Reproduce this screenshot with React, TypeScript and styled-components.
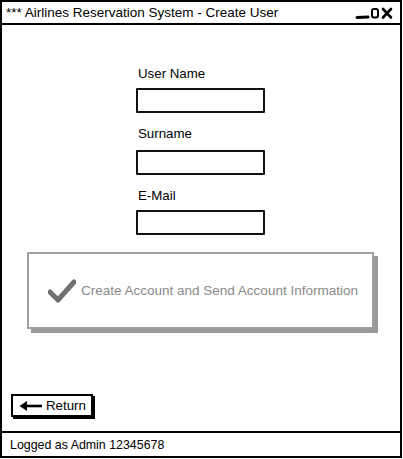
import React from 'react'
import styled, { createGlobalStyle } from 'styled-components'

const GlobalStyle = createGlobalStyle`
  html, body {
    margin: 0;
    padding: 0;
    background: #fff;
  }
  body {
    font-family: 'Liberation Sans', Arial, sans-serif;
    color: #000;
  }
`

const Window = styled.div`
  box-sizing: border-box;
  width: 402px;
  height: 458px;
  border: 2px solid #000;
  display: flex;
  flex-direction: column;
`

const TitleBar = styled.div`
  height: 21px;
  border-bottom: 2px solid #000;
  display: flex;
  align-items: center;
  padding: 0 5px 0 4px;
  font-size: 13.5px;
`

const Title = styled.span`
  flex: 1;
  white-space: nowrap;
`

const Controls = styled.svg`
  display: block;
`

const Content = styled.div`
  flex: 1;
  display: flex;
  flex-direction: column;
`

const Form = styled.div`
  align-self: flex-start;
  width: 129px;
  margin: 41px 0 0 134px;
  display: flex;
  flex-direction: column;
`

const Label = styled.div<{ $gap: number }>`
  font-size: 13.3px;
  line-height: 16px;
  margin: ${(p) => p.$gap}px 0 0 2px;
`

const Input = styled.div<{ $gap: number }>`
  box-sizing: border-box;
  height: 25px;
  border: 2px solid #111;
  border-radius: 1px;
  margin-top: ${(p) => p.$gap}px;
`

const BigButton = styled.div`
  box-sizing: border-box;
  align-self: flex-start;
  width: 347px;
  height: 77px;
  margin: 17px 0 0 25px;
  border: 2px solid #a0a0a0;
  box-shadow: 4px 4px 0 #9a9a9a;
  display: flex;
  align-items: center;
  padding-left: 19px;
  gap: 5px;
  color: #8a8a8a;
  font-size: 13.5px;
  white-space: nowrap;
`

const Spacer = styled.div`
  flex: 1;
`

const ReturnButton = styled.div`
  box-sizing: border-box;
  align-self: flex-start;
  margin: 0 0 14px 9px;
  width: 82px;
  height: 23px;
  border: 2px solid #000;
  box-shadow: 2px 2px 0 #000;
  display: flex;
  align-items: center;
  padding-left: 6px;
  gap: 3px;
  font-size: 13.3px;
`

const StatusBar = styled.div`
  height: 23px;
  border-top: 2px solid #000;
  display: flex;
  align-items: center;
  padding-left: 8px;
  font-size: 12.4px;
`

const WindowControls = () => (
  <Controls width="40" height="14" viewBox="0 0 40 14">
    <path d="M2 11.5 L13 11" stroke="#000" strokeWidth="3" strokeLinecap="round" />
    <rect x="17" y="3" width="6" height="8.5" rx="2" fill="none" stroke="#000" strokeWidth="2" />
    <path d="M28 3 L36 11.5 M36 3 L28 11.5" stroke="#000" strokeWidth="2.6" strokeLinecap="round" />
  </Controls>
)

const CheckIcon = () => (
  <svg width="28" height="24" viewBox="0 0 28 24">
    <path
      d="M2 13 L10 21 L26 3"
      fill="none"
      stroke="#707070"
      strokeWidth="5"
      strokeLinecap="round"
      strokeLinejoin="round"
    />
  </svg>
)

const ArrowLeft = () => (
  <svg width="24" height="12" viewBox="0 0 24 12">
    <path d="M6 6 L23 6" stroke="#000" strokeWidth="2.6" />
    <path d="M0.5 6 L8 1 L8 11 Z" fill="#000" />
  </svg>
)

export default function App() {
  return (
    <>
      <GlobalStyle />
      <Window>
        <TitleBar>
          <Title>*** Airlines Reservation System - Create User</Title>
          <WindowControls />
        </TitleBar>
        <Content>
          <Form>
            <Label $gap={0}>User Name</Label>
            <Input $gap={6} />
            <Label $gap={13}>Surname</Label>
            <Input $gap={8} />
            <Label $gap={13}>E-Mail</Label>
            <Input $gap={6} />
          </Form>
          <BigButton>
            <CheckIcon />
            Create Account and Send Account Information
          </BigButton>
          <Spacer />
          <ReturnButton>
            <ArrowLeft />
            Return
          </ReturnButton>
        </Content>
        <StatusBar>Logged as Admin 12345678</StatusBar>
      </Window>
    </>
  )
}
